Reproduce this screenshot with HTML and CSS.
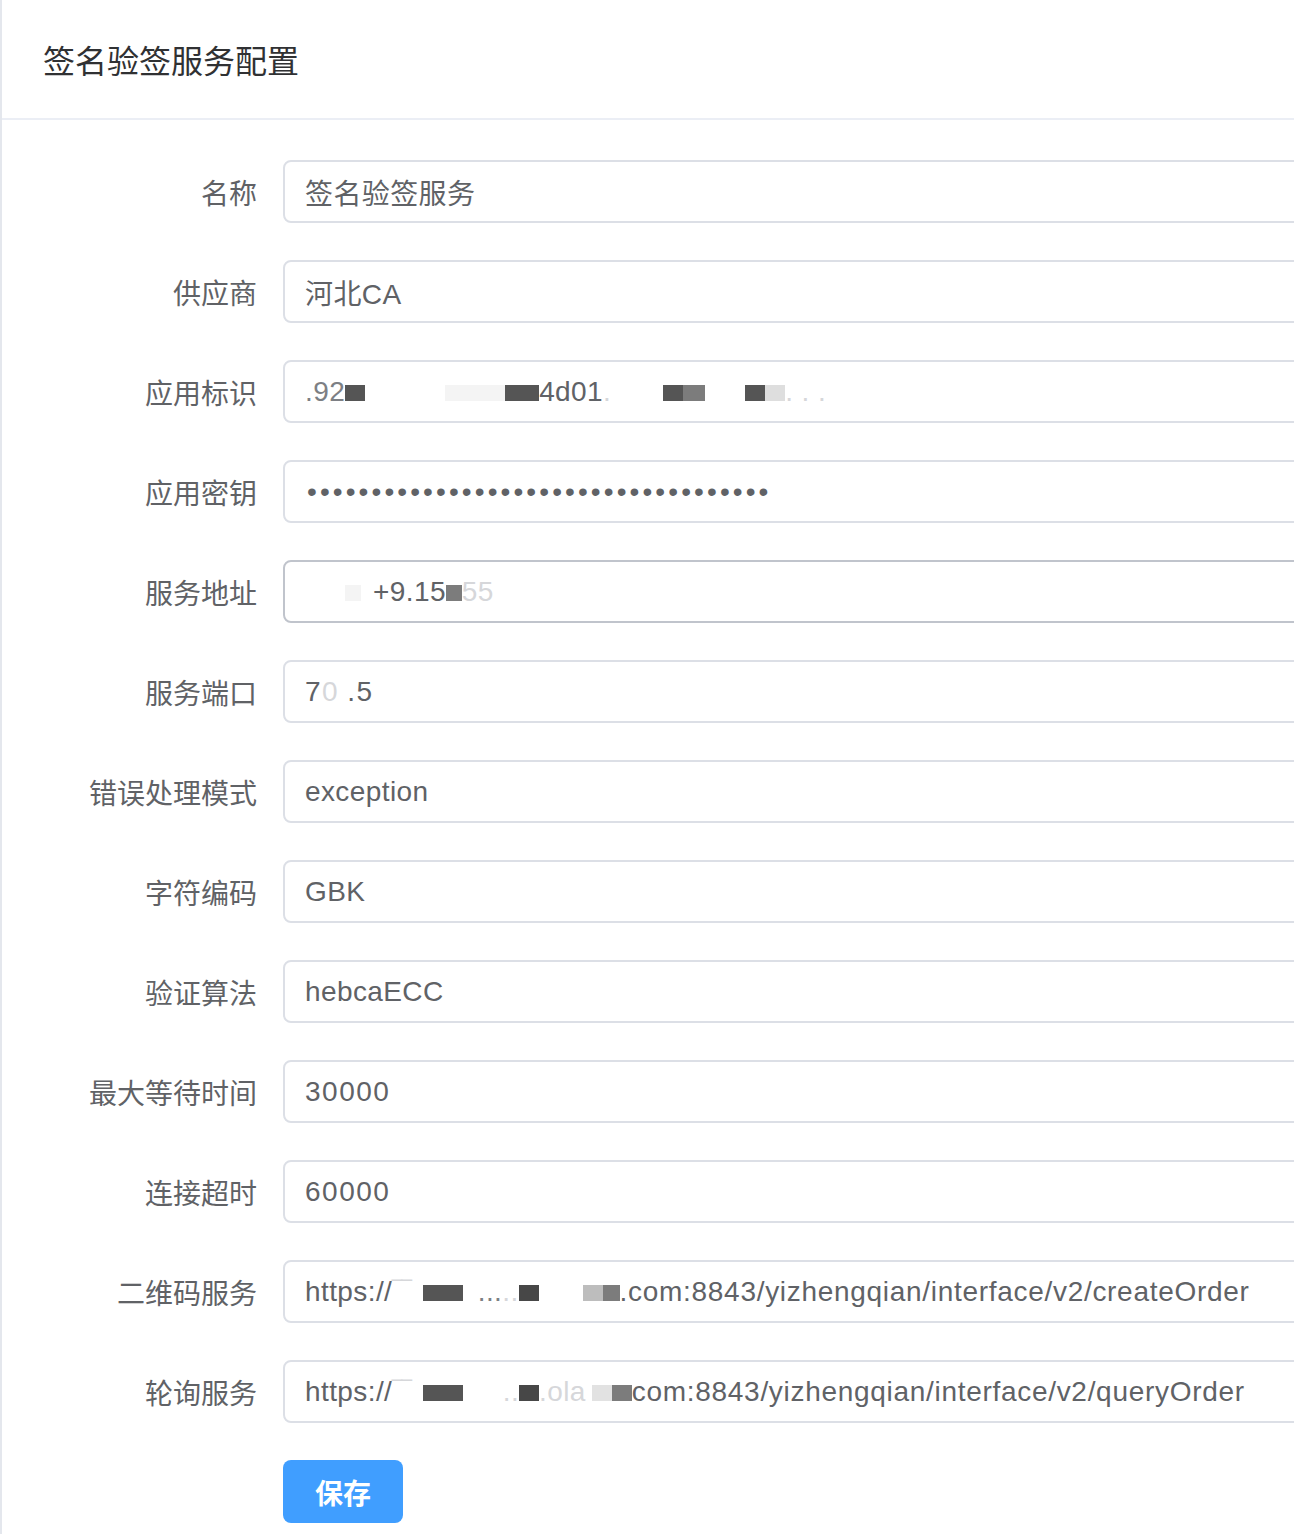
FILE: index.html
```html
<!DOCTYPE html>
<html lang="zh-CN">
<head>
<meta charset="utf-8">
<title>签名验签服务配置</title>
<link rel="stylesheet" href="styles.css">
</head>
<body>
<div class="card">
  <div class="card-header">签名验签服务配置</div>
  <div class="form">
    <div class="row">
      <div class="label">名称</div>
      <div class="input"><span class="val">签名验签服务</span></div>
    </div>
    <div class="row">
      <div class="label">供应商</div>
      <div class="input"><span class="val">河北CA</span></div>
    </div>
    <div class="row">
      <div class="label">应用标识</div>
      <div class="input"><span class="val"><span class="mid">.92</span><span class="blk dk w20"></span><span class="blk xl w60 ml80"></span><span class="blk dk w34"></span>4d01<span class="faint">.</span><span class="blk dk w20 ml52"></span><span class="blk md w22"></span><span class="blk dk w20 ml40"></span><span class="blk lt w20"></span><span class="faint">. . .</span></span></div>
    </div>
    <div class="row">
      <div class="label">应用密钥</div>
      <div class="input"><span class="val dots">••••••••••••••••••••••••••••••••••••</span></div>
    </div>
    <div class="row">
      <div class="label">服务地址</div>
      <div class="input hover"><span class="val"><span class="blk xl w16 ml40"></span><span class="sp w12"></span>+9.15<span class="blk md w16"></span><span class="faint">55</span></span></div>
    </div>
    <div class="row">
      <div class="label">服务端口</div>
      <div class="input"><span class="val num">7<span class="faint">0</span><span class="sp w8"></span>.5</span></div>
    </div>
    <div class="row">
      <div class="label">错误处理模式</div>
      <div class="input"><span class="val">exception</span></div>
    </div>
    <div class="row">
      <div class="label">字符编码</div>
      <div class="input"><span class="val">GBK</span></div>
    </div>
    <div class="row">
      <div class="label">验证算法</div>
      <div class="input"><span class="val">hebcaECC</span></div>
    </div>
    <div class="row">
      <div class="label">最大等待时间</div>
      <div class="input"><span class="val num">30000</span></div>
    </div>
    <div class="row">
      <div class="label">连接超时</div>
      <div class="input"><span class="val num">60000</span></div>
    </div>
    <div class="row">
      <div class="label">二维码服务</div>
      <div class="input"><span class="val">https://<span class="faint">‾‾</span><span class="sp w11"></span><span class="blk dk w40"></span><span class="mid ml15">...</span><span class="faint">..</span><span class="blk dk2 w20"></span><span class="sp w44"></span><span class="blk lt2 w20"></span><span class="blk md w17"></span><span class="tail">.com:8843/yizhengqian/interface/v2/createOrder</span></span></div>
    </div>
    <div class="row">
      <div class="label">轮询服务</div>
      <div class="input"><span class="val">https://<span class="faint">‾‾</span><span class="sp w11"></span><span class="blk dk w40"></span><span class="sp w40"></span><span class="faint">..</span><span class="blk dk2 w20"></span><span class="faint">.ola</span><span class="sp w6"></span><span class="blk xl2 w20"></span><span class="blk md w20"></span><span class="tail">com:8843/yizhengqian/interface/v2/queryOrder</span></span></div>
    </div>
    <div class="row">
      <div class="label"></div>
      <button class="btn" type="button">保存</button>
    </div>
  </div>
</div>
</body>
</html>
```
FILE: styles.css
```css
html, body {
  margin: 0;
  padding: 0;
  background: #ffffff;
  overflow: hidden;
}

body {
  font-family: "Liberation Sans", "Noto Sans CJK SC", sans-serif;
  color: #606266;
}

.card {
  width: 1420px;
  min-height: 1534px;
  box-sizing: border-box;
  border-left: 2px solid #e4e7ed;
  background: #ffffff;
}

.card-header {
  height: 118px;
  box-sizing: content-box;
  border-bottom: 2px solid #ebeef5;
  display: flex;
  align-items: center;
  padding-left: 41px;
  font-size: 32px;
  color: #303133;
}

.form {
  padding-top: 40px;
  display: flex;
  flex-direction: column;
  gap: 37px;
}

.row {
  display: flex;
  align-items: center;
  height: 63px;
}

.label {
  flex: 0 0 281px;
  box-sizing: border-box;
  padding-right: 26px;
  text-align: right;
  font-size: 28px;
  color: #606266;
}

.input {
  flex: 1;
  height: 63px;
  box-sizing: border-box;
  border: 2px solid #dcdfe6;
  border-radius: 8px;
  padding-left: 20px;
  display: flex;
  align-items: center;
  font-size: 28px;
  color: #606266;
  white-space: nowrap;
  overflow: hidden;
}

.input.hover {
  border-color: #c0c4cc;
}

.val {
  display: inline-block;
  letter-spacing: 0.4px;
}

.val.num {
  letter-spacing: 1.5px;
}

.dots {
  letter-spacing: 3.1px;
  padding-left: 2px;
}

.tail {
  letter-spacing: 0.7px;
}

.mid {
  color: #7d7f84;
}

.faint {
  color: #d6d7da;
}

.blk {
  display: inline-block;
  height: 16px;
}

.dk { background: #555555; }
.dk2 { background: #474747; }
.md { background: #7c7c7c; }
.lt { background: #dedede; }
.lt2 { background: #bdbdbd; }
.xl { background: #f4f4f4; }
.xl2 { background: #e2e2e2; }

.sp { display: inline-block; }

.w6 { width: 6px; }
.w8 { width: 8px; }
.w11 { width: 11px; }
.w12 { width: 12px; }
.w16 { width: 16px; }
.w17 { width: 17px; }
.w20 { width: 20px; }
.w22 { width: 22px; }
.w34 { width: 34px; }
.w40 { width: 40px; }
.w44 { width: 44px; }
.w60 { width: 60px; }

.ml15 { margin-left: 15px; }
.ml40 { margin-left: 40px; }
.ml52 { margin-left: 52px; }
.ml80 { margin-left: 80px; }

.btn {
  margin: 0;
  width: 120px;
  height: 63px;
  border: none;
  border-radius: 8px;
  background: #409eff;
  color: #ffffff;
  font-family: "Liberation Sans", "Noto Sans CJK SC", sans-serif;
  font-size: 28px;
  font-weight: 600;
  padding: 0;
  display: flex;
  align-items: center;
  justify-content: center;
}
```
